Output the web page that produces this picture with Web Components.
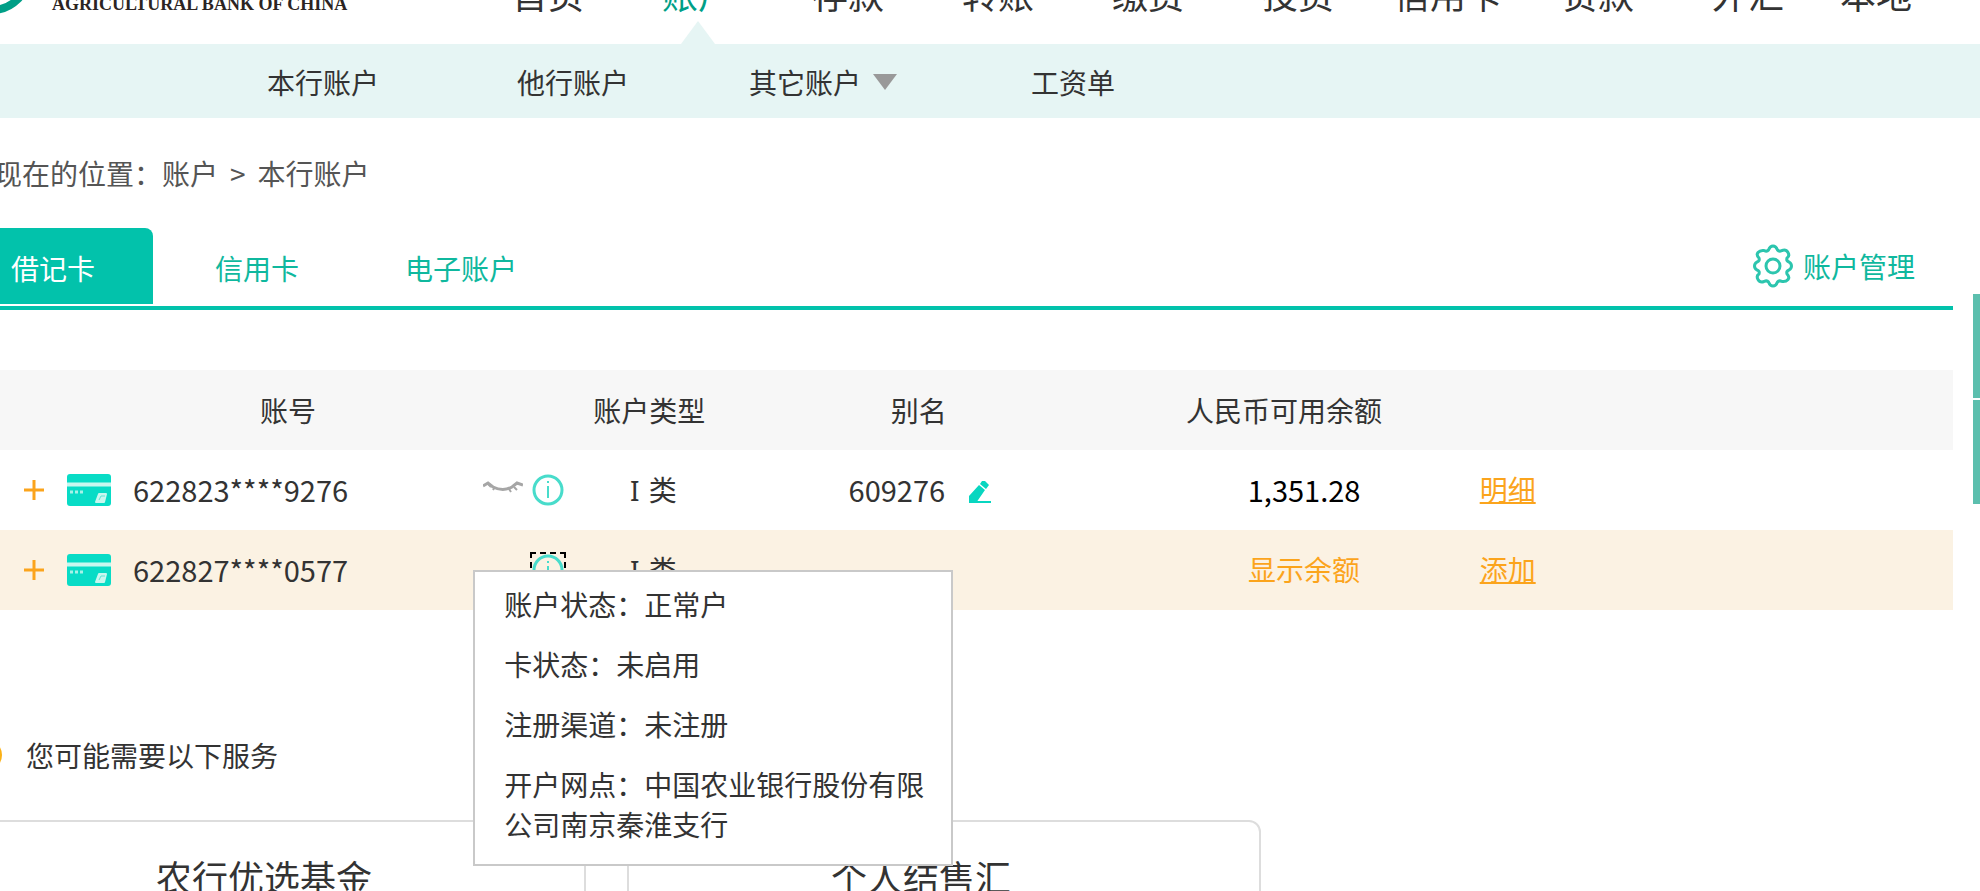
<!DOCTYPE html>
<html lang="zh-CN">
<head>
<meta charset="utf-8">
<title>本行账户</title>
<style>
html, body { margin: 0; height: 100%; overflow: hidden; background: #fff; }
body { position: relative; color: #333; font: 28px/40px "Noto Sans CJK SC", sans-serif; }
</style>
</head>
<body>
<bank-header></bank-header>
<sub-nav></sub-nav>
<bread-crumb></bread-crumb>
<main>
  <account-tabs></account-tabs>
  <account-table></account-table>
  <service-panel>
    <service-card>农行优选基金</service-card>
    <service-card>个人结售汇</service-card>
  </service-panel>
</main>
<side-dock></side-dock>

<script>
const define = (name, html) => {
  const tpl = document.createElement('template');
  tpl.innerHTML = `<style>
    :host, * { box-sizing: border-box; }
    a { color: inherit; text-decoration: none; }
    button { font: inherit; color: inherit; background: none; border: 0; padding: 0; margin: 0; cursor: pointer; }
    svg { display: block; }
  </style>` + html;
  customElements.define(name, class extends HTMLElement {
    constructor() {
      super();
      this.attachShadow({ mode: 'open' }).append(tpl.content.cloneNode(true));
    }
  });
};

define('bank-header', `
<style>
  :host { display: flex; align-items: flex-end; height: 44px; overflow: hidden; }
  .logo { flex: 0 0 473px; display: flex; align-items: flex-end; gap: 20px; height: 44px; }
  .logo svg { flex: none; align-self: flex-start; }
  .logo span { font: bold 18px/20px "Liberation Serif", serif; white-space: nowrap; padding-bottom: 30px; color: #2b2423; }
  nav { display: flex; flex: 1; }
  nav a { position: relative; flex: 0 0 150px; text-align: center; font-size: 36px; line-height: 52px; padding-bottom: 25px; white-space: nowrap; }
  nav a:last-child { flex-basis: 106px; }
  nav a.on { color: #009f87; }
  nav a.on::after { content: ""; position: absolute; left: 50%; bottom: 0; margin-left: -17px;
    border: 17px solid transparent; border-top: 0; border-bottom: 23px solid #e6f5f4; }
</style>
<div class="logo">
  <svg width="32" height="16" viewBox="0 0 32 16" aria-hidden="true"><circle cx="-8" cy="-26" r="36" fill="none" stroke="#009f87" stroke-width="8"/></svg>
  <span>AGRICULTURAL BANK OF CHINA</span>
</div>
<nav>
  <a href="#">首页</a><a href="#" class="on">账户</a><a href="#">存款</a><a href="#">转账</a><a href="#">缴费</a><a href="#">投资</a><a href="#">信用卡</a><a href="#">贷款</a><a href="#">外汇</a><a href="#">本地</a>
</nav>`);

define('sub-nav', `
<style>
  :host { display: flex; align-items: center; height: 74px; padding: 2px 0 0 267px; background: #e6f5f4; }
  a { margin-right: 138px; }
  .more { display: flex; align-items: center; gap: 12px; margin: 0 134px 0 -18px; }
  .more i { border: 12px solid transparent; border-bottom: 0; border-top: 16px solid #999; }
</style>
<a href="#">本行账户</a><a href="#">他行账户</a><button class="more">其它账户<i></i></button><a href="#">工资单</a>`);

define('bread-crumb', `
<style>
  :host { display: flex; gap: 12px; margin: 35px 0 0 -6px; height: 75px; color: #555; white-space: nowrap; }
</style>
<span>现在的位置：<a href="#">账户</a></span><span>&gt;</span><a href="#">本行账户</a>`);

define('account-tabs', `
<style>
  :host { display: flex; height: 82px; margin-right: 27px; border-bottom: 4px solid #02c2ab; color: #0fb89e; }
  button { height: 76px; padding: 4px 53px 0; }
  [aria-selected=true] { background: #02c2ab; color: #fff; border-radius: 0 8px 0 0; padding: 4px 58px 0 11px; margin-right: 9px; }
  .tabs { display: flex; flex: 1; }
  .manage { display: flex; align-items: center; gap: 10px; margin-right: 38px; padding-bottom: 2px; }
</style>
<div class="tabs" role="tablist">
  <button role="tab" aria-selected="true">借记卡</button><button role="tab">信用卡</button><button role="tab">电子账户</button>
</div>
<a class="manage" href="#">
  <svg width="40" height="44" viewBox="0 0 40 44" fill="none" stroke="#2cc5ae" stroke-width="3" stroke-linejoin="round" aria-hidden="true">
    <path d="M15.500 6Q17 2 20 2T24.500 6Q26 8 29 6.500Q33 5 35 8.500T34 14Q33 17 36 18Q38.500 19.500 38.500 22T36 26Q33 27 34 30Q37 33 35 35.500T29 37.500Q26 36 24.500 38Q23 42 20 42T15.500 38Q14 36 11 37.500Q7 39 5 35.500T6 30Q7 27 4 26Q1.500 24.500 1.500 22T4 18Q7 17 6 14Q3 11 5 8.500T11 6.500Q14 8 15.500 6z"/>
    <circle cx="20" cy="22" r="7"/>
  </svg>账户管理</a>`);

define('info-tip', `
<style>
  :host { display: block; position: relative; width: 32px; height: 32px; }
  button { display: block; width: 32px; height: 32px; }
  :host([open]) button { outline: 2px dashed #000; outline-offset: 0; }
  .tip { display: none; position: absolute; z-index: 2; left: -59px; top: 16px; width: 480px; padding: 12px 27px 20px 29px;
    background: #fff; border: 2px solid #c9c9c9; text-align: left; font-size: 28px; line-height: 40px; }
  :host([open]) .tip { display: grid; gap: 20px; }
</style>
<button aria-label="账户信息">
  <svg width="32" height="32" viewBox="0 0 32 32" fill="none" stroke="#48dccb" stroke-width="3" aria-hidden="true"><circle cx="16" cy="16" r="14"/><path d="M16 12v12M16 7v2" stroke-width="2"/></svg>
</button>
<div class="tip" role="tooltip"><slot></slot></div>`);

const CARD = `<svg width="44" height="32" viewBox="0 0 44 32" aria-hidden="true">
  <rect width="44" height="32" rx="3" fill="#08dcc6"/><path d="M0 10.500h44" stroke="#c8f7ef" stroke-width="4"/>
  <path d="M3 18h14" stroke="#a6f2e8" stroke-width="3" stroke-dasharray="3 2"/>
  <path d="M32 20h7l-2 8h-8z" fill="#c8f7ef" stroke="#c8f7ef" stroke-width="2" stroke-linejoin="round"/><path d="M32 26l2-4h4" fill="none" stroke="#5de5d5"/></svg>`;
const PLUS = `<button aria-label="展开"><svg width="22" height="22" viewBox="0 0 22 22" stroke="#fba41c" stroke-width="3" aria-hidden="true"><path d="M2 11h20M12 1v20"/></svg></button>`;

define('account-table', `
<style>
  :host { display: block; margin: 60px 27px 0 0; }
  table { width: 100%; table-layout: fixed; border-collapse: collapse; }
  th { height: 80px; background: #f7f7f7; font-weight: normal; padding: 0; white-space: nowrap; }
  td { height: 80px; padding: 0; text-align: center; }
  td + td { padding-bottom: 2px; }
  th:nth-child(1) { width: 29.5%; } th:nth-child(2) { width: 7.5%; } th:nth-child(3) { width: 20.1%; }
  th:nth-child(4) { width: 17.3%; } th:nth-child(5) { width: 5.6%; }
  td:nth-child(2) { padding-left: 8px; }
  td:nth-child(4) { padding-left: 40px; }
  tr.hot { background: #fbf2e3; }
  .acct { display: flex; align-items: center; padding: 0 12px 0 22px; }
  .acct .num { flex: 1; text-align: left; margin-left: 22px; padding-bottom: 2px; }
  .acct > svg { margin-left: 23px; }
  .acct > .eye { margin: 0 9px 0 0; padding-bottom: 4px; }
  .num { font-size: 29px; }
  .latin { font-family: "Noto Sans", sans-serif; margin-right: 2px; }
  .alias { display: flex; align-items: center; justify-content: center; gap: 24px; padding-left: 2px; }
  .alias button { padding-top: 6px; }
  .black { color: #000; }
  .link { color: #fba41c; }
  .u { text-decoration: underline; text-underline-offset: 1px; text-decoration-thickness: 2px; text-decoration-skip-ink: none; }
</style>
<table>
  <thead><tr><th>账号</th><th>账户类型</th><th>别名</th><th>人民币可用余额</th><th></th><th></th></tr></thead>
  <tbody>
    <tr>
      <td><div class="acct">${PLUS}${CARD}<span class="num">622823****9276</span>
        <svg class="eye" width="40" height="18" viewBox="0 0 40 14" fill="none" stroke="#a6a6a6" stroke-width="2" aria-hidden="true"><path d="M0 5l5-3 5 4q10 5 19 0l5-4 6 2" stroke-width="3"/><path d="M5 3l3 3M12 6l-2 3M26 8l2 3M31 6l3 3"/></svg>
        <info-tip></info-tip></div></td>
      <td><span class="latin">I </span>类</td>
      <td><div class="alias"><span class="num">609276</span><button aria-label="修改别名"><svg width="22" height="22" viewBox="0 0 22 22" fill="#08d6c0" aria-hidden="true"><path d="M0 22v-7L10 4l6 5L7 22zM11 3l2-3h3l4 4-3 4zM6 20h16v2H6z"/></svg></button></div></td>
      <td><span class="num black">1,351.28</span></td>
      <td><a class="link u" href="#">明细</a></td>
      <td></td>
    </tr>
    <tr class="hot">
      <td><div class="acct">${PLUS}${CARD}<span class="num">622827****0577</span>
        <info-tip open><div>账户状态：正常户</div><div>卡状态：未启用</div><div>注册渠道：未注册</div><div>开户网点：中国农业银行股份有限公司南京秦淮支行</div></info-tip></div></td>
      <td><span class="latin">I </span>类</td>
      <td></td>
      <td><button class="link">显示余额</button></td>
      <td><a class="link u" href="#">添加</a></td>
      <td></td>
    </tr>
  </tbody>
</table>`);

define('service-panel', `
<style>
  :host { display: block; margin: 125px 0 0 -48px; }
  h2 { display: flex; align-items: center; gap: 24px; margin: 0 0 45px 18px; font-size: 28px; font-weight: normal; line-height: 40px; }
  h2 i { width: 32px; height: 32px; border-radius: 50%; background: #fbb116; }
  .cards { display: flex; gap: 41px; }
</style>
<h2><i></i>您可能需要以下服务</h2>
<div class="cards"><slot></slot></div>`);

define('service-card', `
<style>
  :host { display: block; flex: 0 1 634px; height: 240px; padding: 28px 0 0 202px; border: 2px solid #ddd; border-radius: 12px; }
  a { font-size: 36px; line-height: 52px; white-space: nowrap; }
</style>
<a href="#"><slot></slot></a>`);

define('side-dock', `
<style>
  :host { position: absolute; right: 0; top: 294px; display: grid; gap: 2px; }
  button { display: block; width: 7px; height: 104px; background: #5cbfae; }
</style>
<button aria-label="客服"></button><button aria-label="反馈"></button>`);
</script>
</body>
</html>
